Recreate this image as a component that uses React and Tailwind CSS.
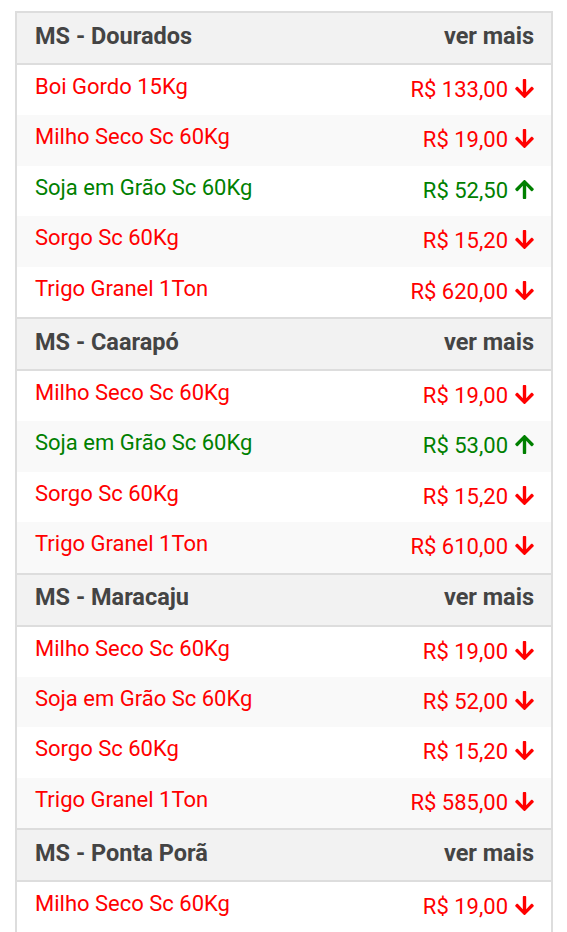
import React from "react";

const sections = [
    {
        city: "MS - Dourados",
        items: [
            { name: "Boi Gordo 15Kg", price: "R$ 133,00", up: false },
            { name: "Milho Seco Sc 60Kg", price: "R$ 19,00", up: false },
            { name: "Soja em Grão Sc 60Kg", price: "R$ 52,50", up: true },
            { name: "Sorgo Sc 60Kg", price: "R$ 15,20", up: false },
            { name: "Trigo Granel 1Ton", price: "R$ 620,00", up: false },
        ],
    },
    {
        city: "MS - Caarapó",
        items: [
            { name: "Milho Seco Sc 60Kg", price: "R$ 19,00", up: false },
            { name: "Soja em Grão Sc 60Kg", price: "R$ 53,00", up: true },
            { name: "Sorgo Sc 60Kg", price: "R$ 15,20", up: false },
            { name: "Trigo Granel 1Ton", price: "R$ 610,00", up: false },
        ],
    },
    {
        city: "MS - Maracaju",
        items: [
            { name: "Milho Seco Sc 60Kg", price: "R$ 19,00", up: false },
            { name: "Soja em Grão Sc 60Kg", price: "R$ 52,00", up: false },
            { name: "Sorgo Sc 60Kg", price: "R$ 15,20", up: false },
            { name: "Trigo Granel 1Ton", price: "R$ 585,00", up: false },
        ],
    },
    {
        city: "MS - Ponta Porã",
        items: [
            { name: "Milho Seco Sc 60Kg", price: "R$ 19,00", up: false },
            { name: "Soja em Grão Sc 60Kg", price: "R$ 52,00", up: false },
        ],
    },
];

// solid arrow, points down; rotated for "up"
function Arrow({ up }) {
    return (
        <svg viewBox="0 32 448 448" className={`mt-[2px] w-[19px] h-[19px] ${up ? "rotate-180" : ""}`} fill="currentColor">
            <path d="M413.1 222.5l22.2 22.2c9.4 9.4 9.4 24.6 0 33.9L241 473c-9.4 9.4-24.6 9.4-33.9 0L12.7 278.6c-9.4-9.4-9.4-24.6 0-33.9l22.2-22.2c9.5-9.5 25-9.3 34.3.4L184 343.4V56c0-13.3 10.7-24 24-24h32c13.3 0 24 10.7 24 24v287.4l114.8-120.5c9.3-9.8 24.8-10 34.3-.4z" />
        </svg>
    );
}

function QuoteRow({ item, index }) {
    const color = item.up ? "text-[#008000]" : "text-[#ff0000]";
    return (
        <div className={`flex justify-between h-[50.4px] pl-[18px] pr-[17px] text-[22px] ${index % 2 ? "bg-[#f9f9f9]" : "bg-white"} ${color}`}>
            <span className="pt-[9px] leading-[26px]">{item.name}</span>
            <span className="pt-[12px] leading-[26px] flex items-start gap-[7px]">
                {item.price}
                <Arrow up={item.up} />
            </span>
        </div>
    );
}

export default function App() {
    return (
        <div className="bg-white h-[932px] overflow-hidden pt-[11px] font-['Roboto',sans-serif]">
            <div className="ml-[15px] w-[538px] border-2 border-[#dddddd]">
                {sections.map((s, i) => (
                    <div key={s.city} className={i > 0 ? "border-t-2 border-[#dddddd]" : ""}>
                        {/* header */}
                        <div className="flex justify-between items-center h-[52px] pl-[18px] pr-[17px] pb-[3px] bg-[#f2f2f2] border-b-2 border-[#dddddd] font-bold text-[23.5px] text-[#444444]">
                            <span>{s.city}</span>
                            <span>ver mais</span>
                        </div>
                        {s.items.map((item, j) => (
                            <QuoteRow key={j} item={item} index={j} />
                        ))}
                    </div>
                ))}
            </div>
        </div>
    );
}
